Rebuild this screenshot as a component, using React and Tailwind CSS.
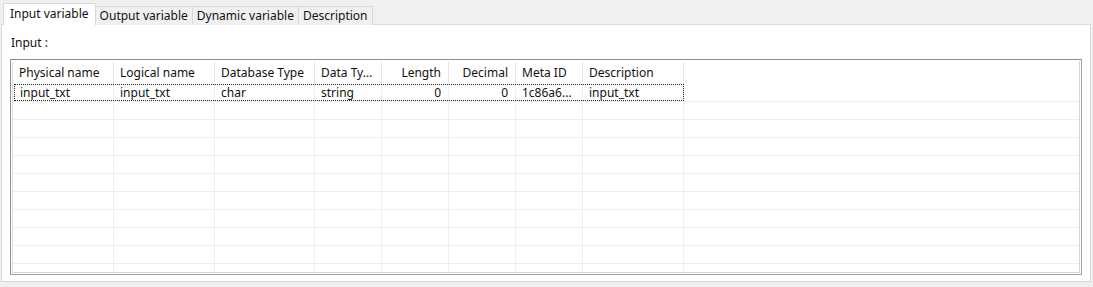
import React from "react";

const COLUMNS = [
  { key: "physical", label: "Physical name", width: 101, align: "left" },
  { key: "logical", label: "Logical name", width: 101, align: "left" },
  { key: "dbType", label: "Database Type", width: 100, align: "left" },
  { key: "dataType", label: "Data Ty...", width: 67, align: "left" },
  { key: "length", label: "Length", width: 67, align: "right" },
  { key: "decimal", label: "Decimal", width: 67, align: "right" },
  { key: "metaId", label: "Meta ID", width: 67, align: "left" },
  { key: "desc", label: "Description", width: 101, align: "left" },
];

const ROWS = [
  {
    physical: "input_txt",
    logical: "input_txt",
    dbType: "char",
    dataType: "string",
    length: "0",
    decimal: "0",
    metaId: "1c86a6...",
    desc: "input_txt",
  },
];

const TABS = ["Input variable", "Output variable", "Dynamic variable", "Description"];
const EMPTY_ROWS = 10;

function Tabs() {
  return (
    <div className="flex items-end h-[22px] pl-[2px]">
      {TABS.map((t, i) =>
        i === 0 ? (
          <div
            key={t}
            className="relative z-10 h-[22px] px-[6px] pt-[2px] bg-white border border-b-0 border-[#d9d9d9] text-[12px] leading-[16px]"
          >
            {t}
          </div>
        ) : (
          <div
            key={t}
            className="h-[19px] px-[4px] bg-[#f0f0f0] border border-l-0 border-b-0 border-[#d9d9d9] text-[12px] leading-[17px]"
          >
            {t}
          </div>
        )
      )}
    </div>
  );
}

function Cell({ col, children, header }) {
  return (
    <div
      style={{ width: col.width }}
      className={`shrink-0 h-full border-r whitespace-nowrap overflow-hidden ${
        header ? "border-[#e5e5e5]" : "border-[#eaf0f8]"
      } ${col.align === "right" ? "text-right pr-[7px]" : "pl-[6px]"}`}
    >
      {children}
    </div>
  );
}

export default function App() {
  return (
    <div
      className="w-[1093px] h-[287px] bg-[#f0f0f0] pt-[3px] pl-[1px] pr-[2px] text-[#111]"
      style={{ fontFamily: '"Noto Sans", "Noto Sans CJK KR", sans-serif' }}
    >
      <Tabs />
      <div className="-mt-px h-[258px] bg-white border border-[#d9d9d9] px-[8px] pt-[10px]">
        <div className="text-[12px] leading-[16px] pl-[1px]">Input :</div>

        {/* grid */}
        <div className="mt-[8px] h-[216px] border border-[#8f8f8f] border-r-[#a0a0a0] border-b-[#a0a0a0] p-px overflow-hidden">
          <div className="h-full border border-l-[#dcdcdc] border-t-[#ffffff] border-r-[#d4d4d4] border-b-[#d4d4d4] overflow-hidden text-[12px]">
            {/* header */}
            <div className="flex h-[22px] leading-[22px]">
              {COLUMNS.map((c) => (
                <Cell key={c.key} col={c} header>
                  {c.label}
                </Cell>
              ))}
            </div>

            {/* data rows */}
            {ROWS.map((r, i) => (
              <div key={i} className="flex h-[18px] leading-[17px] border-b border-[#eeeeee]">
                <div className="flex h-full outline outline-1 outline-dotted outline-[#222] -outline-offset-1 ml-px">
                  {COLUMNS.map((c, j) => (
                    <Cell key={c.key} col={j === 0 ? { ...c, width: c.width - 1 } : c}>
                      {r[c.key]}
                    </Cell>
                  ))}
                </div>
              </div>
            ))}

            {Array.from({ length: EMPTY_ROWS }).map((_, i) => (
              <div key={i} className="flex h-[18px] border-b border-[#eeeeee]">
                {COLUMNS.map((c) => (
                  <Cell key={c.key} col={c} />
                ))}
              </div>
            ))}
          </div>
        </div>
      </div>
    </div>
  );
}
